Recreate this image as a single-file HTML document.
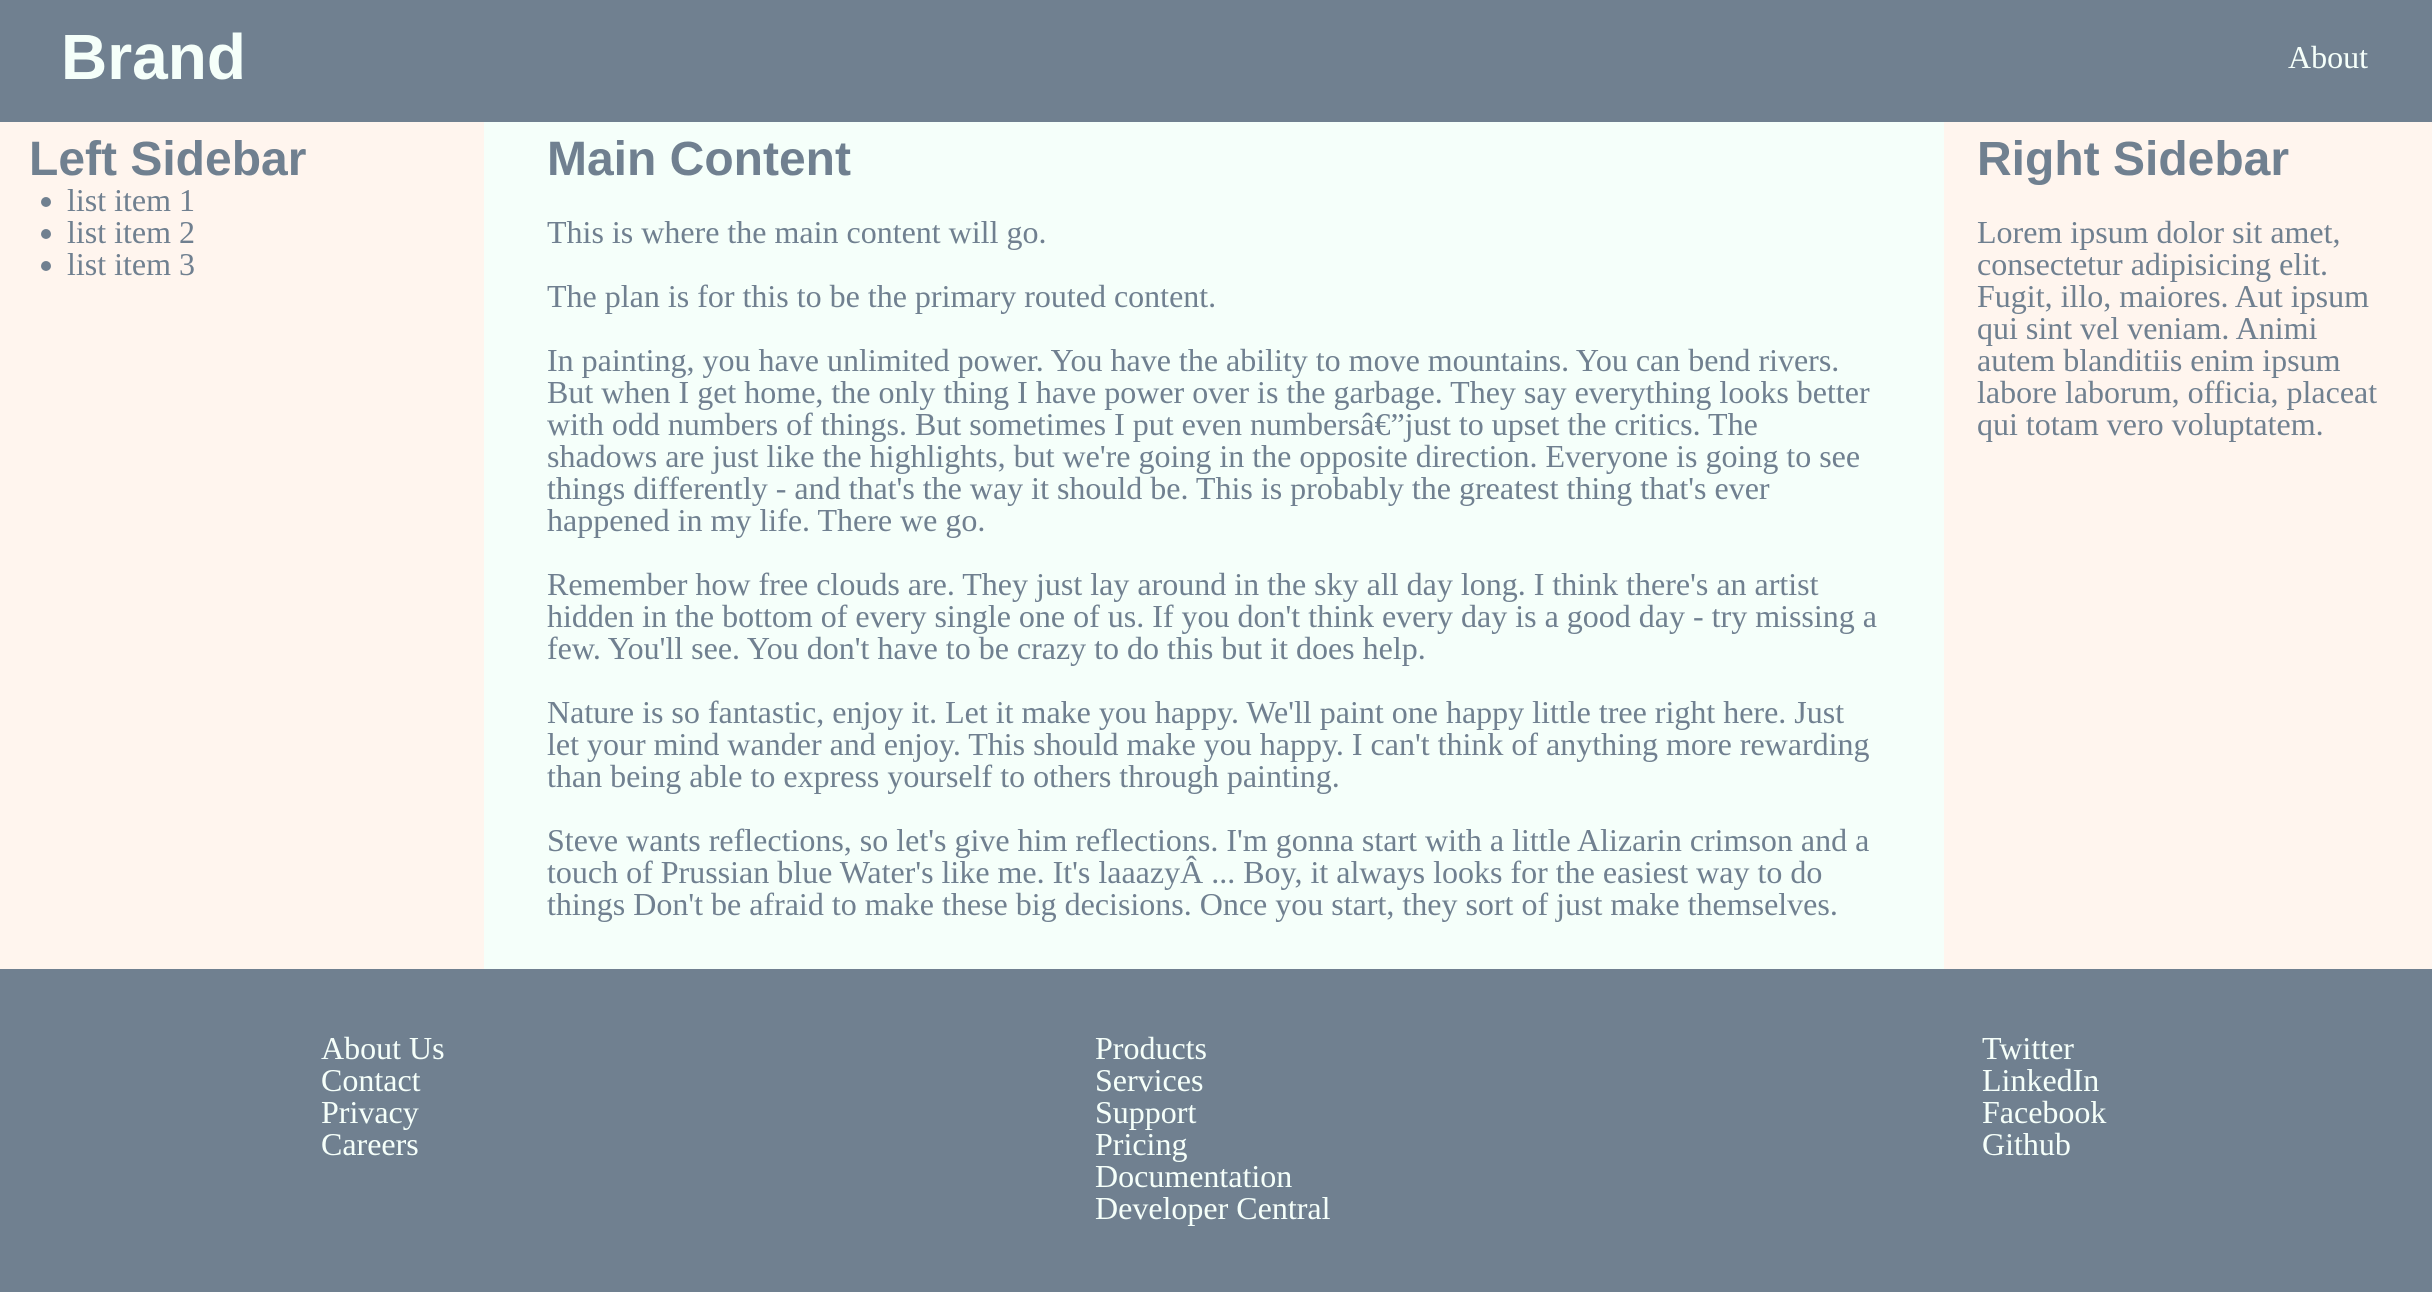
<!DOCTYPE html>
<html><head><meta charset="utf-8"><style>
*{box-sizing:border-box;margin:0;padding:0}
body{width:2432px;height:1292px;overflow:hidden;background:#708090;font-family:"Liberation Serif",serif;font-size:32px;line-height:32px;color:#708090}
header{height:122px;background:#708090;position:relative}
.brand{position:absolute;left:61px;top:17px;font:bold 64px/80px "Liberation Sans",sans-serif;color:#f5fffa}
.about{position:absolute;right:64px;top:41px;color:#f5fffa}
.wrap{display:flex;height:847px}
h2{font:bold 48px/48px "Liberation Sans",sans-serif;margin-top:14px}
.left{width:484px;background:#fff5ee;padding-left:29px}
.left ul{padding-left:38px}
.main{width:1460px;background:#f5fffa;padding:0 64px 0 63px}
.main p{margin-top:32px}
.right{width:488px;background:#fff5ee;padding:0 30px 0 33px}
.right p{margin-top:32px}
footer{height:323px;position:relative;color:#f5fffa}
footer div{position:absolute;top:63px}
</style></head><body>
<header><div class="brand">Brand</div><div class="about">About</div></header>
<div class="wrap">
<div class="left"><h2>Left Sidebar</h2><ul><li>list item 1</li><li>list item 2</li><li>list item 3</li></ul></div>
<div class="main"><h2>Main Content</h2>
<p>This is where the main content will go.</p>
<p>The plan is for this to be the primary routed content.</p>
<p>In painting, you have unlimited power. You have the ability to move mountains. You can bend rivers. But when I get home, the only thing I have power over is the garbage. They say everything looks better with odd numbers of things. But sometimes I put even numbersâ€”just to upset the critics. The<br>shadows are just like the highlights, but we're going in the opposite direction. Everyone is going to see things differently - and that's the way it should be. This is probably the greatest thing that's ever happened in my life. There we go.</p>
<p>Remember how free clouds are. They just lay around in the sky all day long. I think there's an artist hidden in the bottom of every single one of us. If you don't think every day is a good day - try missing a few. You'll see. You don't have to be crazy to do this but it does help.</p>
<p>Nature is so fantastic, enjoy it. Let it make you happy. We'll paint one happy little tree right here. Just let your mind wander and enjoy. This should make you happy. I can't think of anything more rewarding than being able to express yourself to others through painting.</p>
<p>Steve wants reflections, so let's give him reflections. I'm gonna start with a little Alizarin crimson and a touch of Prussian blue Water's like me. It's laaazyÂ ... Boy, it always looks for the easiest way to do things Don't be afraid to make these big decisions. Once you start, they sort of just make themselves.</p>
</div>
<div class="right"><h2>Right Sidebar</h2><p>Lorem ipsum dolor sit amet, consectetur adipisicing elit. Fugit, illo, maiores. Aut ipsum qui sint vel veniam. Animi autem blanditiis enim ipsum labore laborum, officia, placeat qui totam vero voluptatem.</p></div>
</div>
<footer>
<div style="left:321px">About Us<br>Contact<br>Privacy<br>Careers</div>
<div style="left:1095px">Products<br>Services<br>Support<br>Pricing<br>Documentation<br>Developer Central</div>
<div style="left:1982px">Twitter<br>LinkedIn<br>Facebook<br>Github</div>
</footer>
</body></html>
